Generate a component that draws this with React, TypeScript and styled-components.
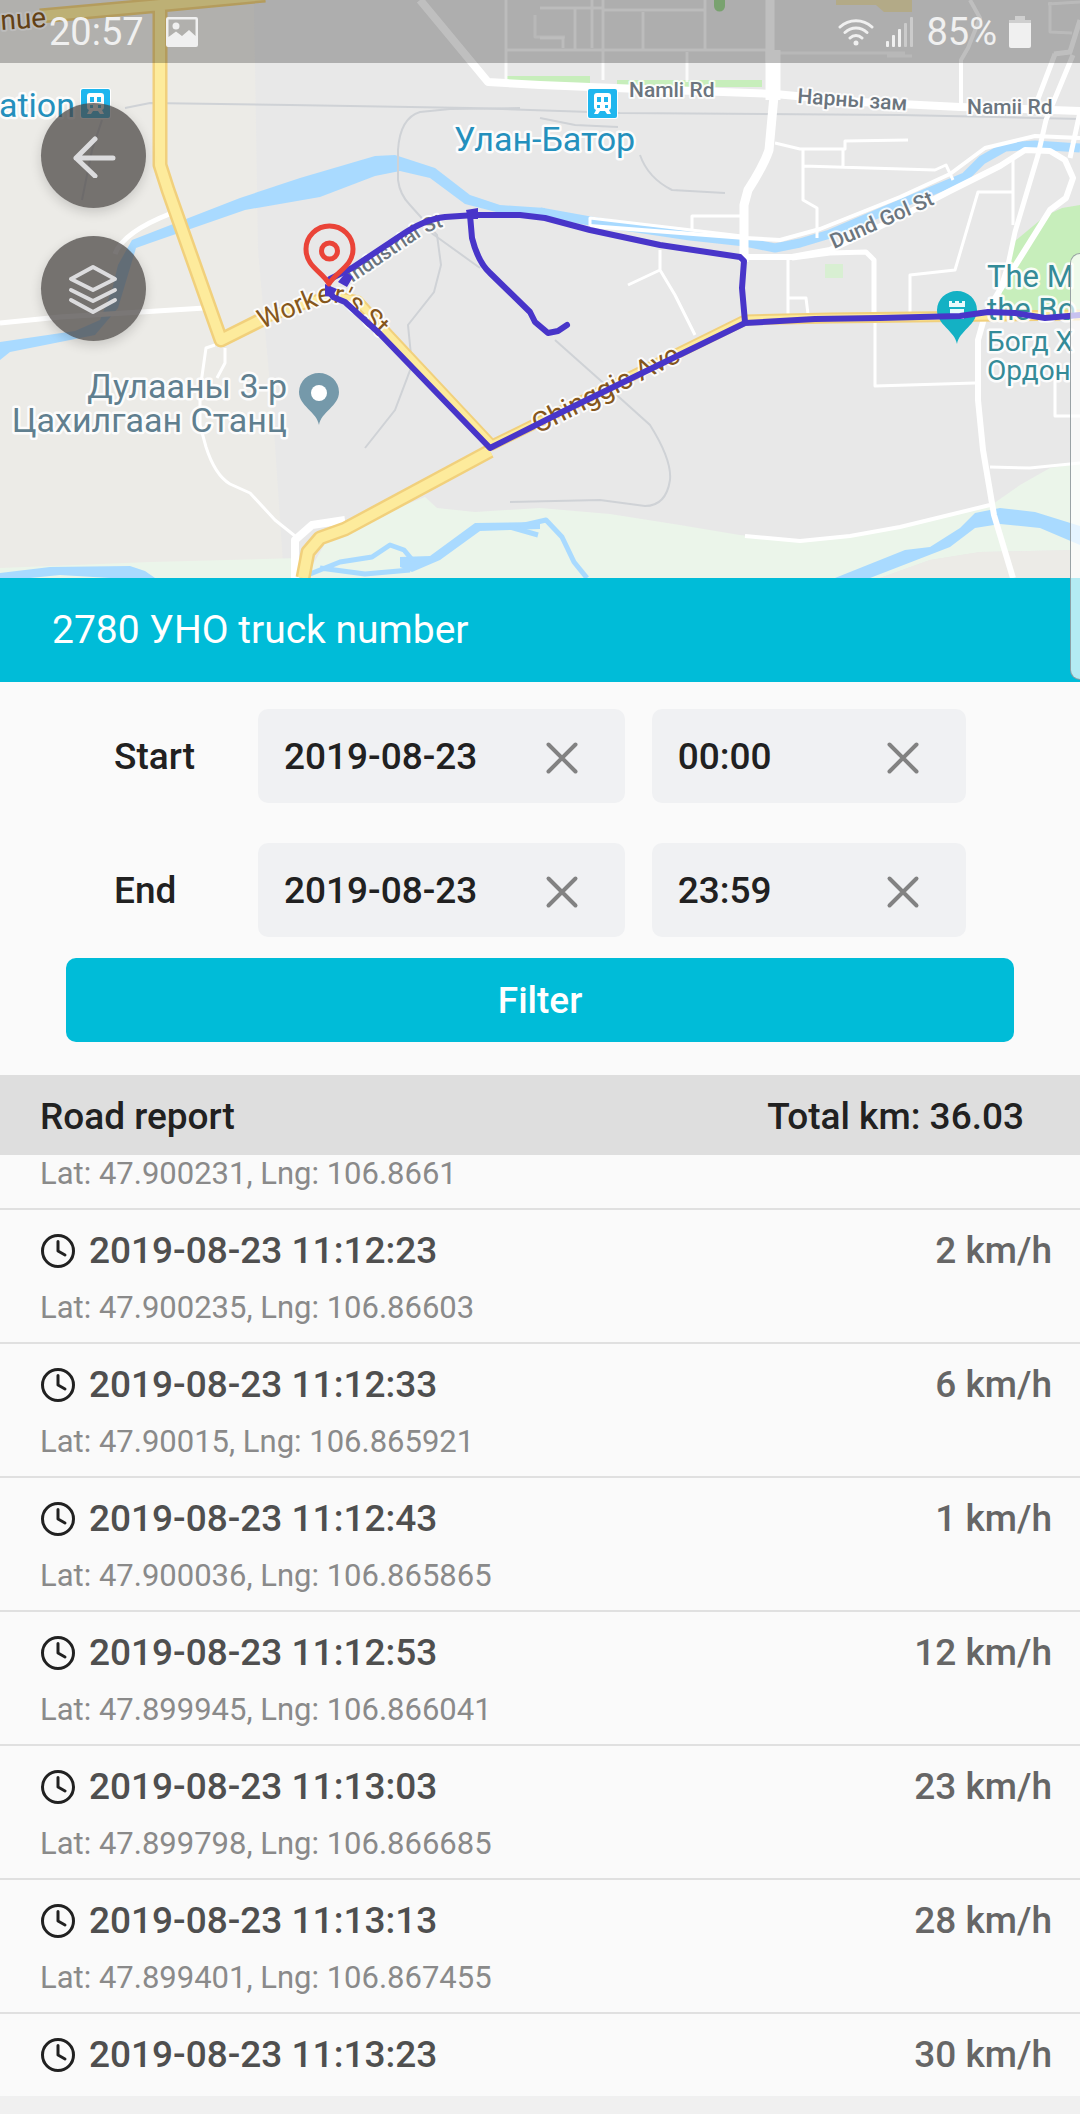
import React from "react";
import styled, { createGlobalStyle } from "styled-components";

const GlobalStyle = createGlobalStyle`
  *, *::before, *::after { box-sizing: border-box; }
  body { margin: 0; background: #f0f0f0; }
  body, button, input { font-family: Roboto, "Noto Sans", sans-serif; }
`;

const cyan = "#00bcd8";

const Screen = styled.div`
  position: relative;
  display: flex;
  flex-direction: column;
  background: #fafafa;
  color: #212121;
`;

/* ---------- status bar ---------- */

const StatusBar = styled.div`
  position: absolute;
  inset: 0 0 auto 0;
  display: flex;
  align-items: center;
  justify-content: space-between;
  height: 63px;
  padding: 0 49px;
  background: rgba(0, 0, 0, 0.25);
  color: #f0f0f0;
  font-size: 38px;
  line-height: 40px;
`;

const StatusGroup = styled.div<{ $gap: number }>`
  display: flex;
  align-items: center;
  gap: ${(p) => p.$gap}px;
`;

/* ---------- map ---------- */

const MapArea = styled.section`
  position: relative;
  display: flex;
`;

const MapCanvas = styled.svg`
  display: block;
  width: 100%;
  aspect-ratio: 1080 / 578;
`;

const MapControls = styled.div`
  position: absolute;
  top: 103px;
  left: 41px;
  display: flex;
  flex-direction: column;
  gap: 28px;
`;

const RoundButton = styled.button`
  display: grid;
  place-items: center;
  width: 105px;
  height: 105px;
  padding: 0;
  border: 0;
  border-radius: 50%;
  background: rgba(70, 67, 65, 0.72);
  box-shadow: 0 4px 12px rgba(0, 0, 0, 0.16);
  color: #dcdcde;
  cursor: pointer;
`;

const EdgeHandle = styled.div`
  position: absolute;
  top: 253px;
  right: 0;
  width: 10px;
  height: 427px;
  border: 1px solid rgba(130, 140, 145, 0.8);
  border-right: 0;
  border-radius: 10px 0 0 10px;
  background: rgba(255, 255, 255, 0.7);
`;

/* ---------- header and filter ---------- */

const TitleBar = styled.header`
  display: flex;
  align-items: center;
  height: 104px;
  padding: 0 52px;
  background: ${cyan};
  color: #fff;
`;

const Title = styled.h1`
  margin: 0;
  font-size: 39px;
  line-height: 48px;
  font-weight: 400;
`;

const FilterForm = styled.form`
  display: flex;
  flex-direction: column;
  padding: 27px 66px 33px;
`;

const FilterRow = styled.div`
  display: grid;
  grid-template-columns: 117px minmax(0, 7fr) minmax(0, 6fr);
  column-gap: 27px;
  align-items: center;
  padding: 0 48px;
  margin-bottom: 40px;

  &:nth-of-type(2) { margin-bottom: 21px; }
`;

const RowLabel = styled.label`
  padding-top: 2px;
  font-size: 37px;
  line-height: 44px;
  font-weight: 500;
`;

const Field = styled.div`
  display: flex;
  align-items: center;
  height: 94px;
  padding: 0 16px 0 26px;
  border-radius: 10px;
  background: #f0f1f3;
`;

const FieldInput = styled.input`
  flex: 1;
  min-width: 0;
  padding: 2px 0 0;
  border: 0;
  outline: 0;
  background: transparent;
  color: #212121;
  font-size: 37px;
  line-height: 44px;
  font-weight: 500;
`;

const ClearButton = styled.button`
  display: grid;
  place-items: center;
  width: 94px;
  height: 94px;
  padding: 4px 0 0;
  border: 0;
  background: transparent;
  color: #828282;
  cursor: pointer;
`;

const SubmitButton = styled.button`
  height: 84px;
  padding: 2px 0 0;
  border: 0;
  border-radius: 10px;
  background: ${cyan};
  color: #fff;
  font-size: 37px;
  line-height: 44px;
  font-weight: 500;
  cursor: pointer;
`;

/* ---------- report ---------- */

const ReportBar = styled.div`
  display: flex;
  align-items: center;
  justify-content: space-between;
  height: 80px;
  padding: 4px 56px 0 40px;
  background: #dedede;
  font-size: 37px;
  line-height: 44px;
  font-weight: 500;
`;

const ReportTitle = styled.h2`
  margin: 0;
  font: inherit;
`;

const ReportList = styled.ul`
  margin: 0;
  padding: 0;
  list-style: none;
`;

const ReportItem = styled.li`
  display: flex;
  flex-direction: column;
  gap: 19px;
  padding: 21px 28px 16px 40px;
  border-bottom: 2px solid #e0e0e0;

  &:first-child { padding-top: 1px; }
  &:last-child { padding-bottom: 21px; border-bottom: 0; }
`;

const ItemHead = styled.div`
  display: flex;
  align-items: center;
  gap: 13px;
  font-size: 37px;
  line-height: 40px;
  font-weight: 500;
`;

const Stamp = styled.time`
  flex: 1;
  color: #4f4f4f;
`;

const Speed = styled.span`
  color: #666;
`;

const Coords = styled.div`
  color: #8a8a8a;
  font-size: 31px;
  line-height: 36px;
`;

const BottomStrip = styled.div`
  height: 20px;
  background: #f0f0f0;
`;

/* ---------- icons ---------- */

const ClockIcon = () => (
  <svg width="36" height="36" viewBox="0 0 36 36" fill="none" stroke="#212121" strokeWidth="3" strokeLinecap="round" strokeLinejoin="round" aria-hidden="true">
    <circle cx="18" cy="18" r="15.500" />
    <path d="M18 8.500v9.500l7 4" />
  </svg>
);

const CrossIcon = () => (
  <svg width="34" height="34" viewBox="0 0 34 34" fill="none" stroke="currentColor" strokeWidth="4" strokeLinecap="round" aria-hidden="true">
    <path d="M3.500 3.500L30.500 30.500M30.500 3.500L3.500 30.500" />
  </svg>
);

const ArrowIcon = () => (
  <svg width="44" height="44" viewBox="0 0 44 44" fill="none" stroke="currentColor" strokeWidth="5" strokeLinecap="round" strokeLinejoin="round" aria-hidden="true">
    <path d="M23 5L4 24L23 42M4 24H41" />
  </svg>
);

const LayersIcon = () => (
  <svg width="52" height="52" viewBox="0 0 52 52" fill="none" stroke="currentColor" strokeWidth="4" strokeLinecap="round" strokeLinejoin="round" aria-hidden="true">
    <path d="M25 4L47 16L25 27L3 16ZM3 27L25 38L47 27M3 37L25 49L47 37" />
  </svg>
);

const PictureIcon = () => (
  <svg width="32" height="30" viewBox="0 0 32 30" aria-hidden="true">
    <path fillRule="evenodd" fill="currentColor" d="M2 0H30a2 2 0 0 1 2 2V28a2 2 0 0 1-2 2H2a2 2 0 0 1-2-2V2a2 2 0 0 1 2-2ZM2.500 2.500V20L10 14.500L16 19L23 13L29.500 19V2.500Z" />
    <circle cx="10" cy="9" r="3.500" fill="currentColor" />
  </svg>
);

const WifiIcon = () => (
  <svg width="36" height="28" viewBox="0 0 36 28" fill="none" stroke="currentColor" strokeWidth="3" strokeLinecap="round" aria-hidden="true">
    <path d="M2 9C11 .5 25 .5 34 9M7 14.500C13.500 8.500 22.500 8.500 29 14.500M12 20C15.500 16.500 20.500 16.500 24 20" />
    <circle cx="18" cy="25" r="2.500" fill="currentColor" stroke="none" />
  </svg>
);

const SignalIcon = () => (
  <svg width="28" height="30" viewBox="0 0 28 30" fill="currentColor" aria-hidden="true">
    <rect x="0" y="24" width="3" height="6" rx="1" />
    <rect x="6" y="18" width="3" height="12" rx="1" />
    <rect x="12" y="12" width="3" height="18" rx="1" />
    <rect x="18" y="6" width="3" height="24" rx="1" opacity=".45" />
    <rect x="24" y="0" width="3" height="30" rx="1" opacity=".45" />
  </svg>
);

const BatteryIcon = () => (
  <svg width="22" height="32" viewBox="0 0 22 32" fill="currentColor" aria-hidden="true">
    <path d="M6 0h10v4H6Z" opacity=".5" />
    <path d="M0 7V4h22v3Z" opacity=".5" />
    <path d="M0 7h22v23a2 2 0 0 1-2 2H2a2 2 0 0 1-2-2Z" />
  </svg>
);

const StationBadge = ({ x, y }: { x: number; y: number }) => (
  <g transform={`translate(${x} ${y})`}>
    <rect x="-1" y="-1" width="31" height="31" rx="3" fill="#fff" />
    <rect width="29" height="29" rx="2" fill="#1fb6ee" />
    <path fill="#fff" d="M9 4H20a3 3 0 0 1 3 3V18a3 3 0 0 1-2 3l2 4H19l-2-3H12l-2 3H6l2-4a3 3 0 0 1-2-3V7a3 3 0 0 1 3-3Z" />
    <path fill="#1fb6ee" d="M9 8h4v5H9ZM16 8h4v5H16ZM9 16h3v3H9ZM17 16h3v3H17Z" />
  </g>
);

/* ---------- map drawing ---------- */

const CityMap = () => (
  <MapCanvas viewBox="0 0 1080 578" preserveAspectRatio="xMidYMid slice" role="img" aria-label="Truck route">
    <rect width="1080" height="578" fill="#e8e8e8" />
    <path d="M0 0H254L258 250L274 430L284 578H0Z" fill="#ecebe7" />

    {/* parks and flood plain */}
    <path d="M1080 205L1062 208L1045 216L1015 241L1008 262L1000 300V312H1080Z" fill="#c7eebb" />
    <path d="M0 568L150 562L300 558V578H0Z" fill="#ebf5ea" />
    <path d="M305 578L330 535L425 497L437 508L475 512L540 508L610 514L680 525L740 535L800 542L850 537L990 506L1020 485L1050 468L1080 463V550L980 552L930 560L880 578Z" fill="#ebf5ea" />
    <path d="M880 578L930 560L980 552L1080 550V578Z" fill="#ecebe7" />
    <path d="M507 76H590V83H507ZM617 80H762V87H617Z" fill="#c7eebb" />
    <path d="M825 264h18v14h-18Z" fill="#d8efd2" />
    <path d="M714 0h11v6a5 5 0 0 1-11 0Z" fill="#a2d895" />
    <path d="M836 0h76v12h-28l-8-7h-40Z" fill="#efe3b5" />

    {/* rivers */}
    <g fill="#a9daff">
      <path d="M132 240L240 198L300 178L375 156L395 155L435 168L470 195L500 205L545 208V216L500 213L465 204L430 178L400 171L375 176L320 197L245 210L150 243L136 248L130 268L118 308L95 335L10 352L0 360V342L75 331L100 320L112 290L118 265Z" />
      <path d="M835 578L905 550L930 547L960 528L975 513L1000 508L1035 512L1080 526V545L1040 528L1000 524L975 528L950 547L870 578Z" />
      <path d="M0 573L50 567L130 566L145 571L155 578H110L60 575L30 578H0Z" />
      <path d="M400 557L430 556L475 523L540 522V529L480 531L440 560L412 572L400 567Z" />
    </g>
    <g fill="none" stroke="#a9daff" strokeLinejoin="round">
      <path d="M540 212L590 221L690 236L745 242L775 248L800 243L830 234L910 200L965 177L982 160L1005 147L1035 145L1080 148" strokeWidth="9" />
      <path d="M310 574L340 562L372 557L390 545L404 550L414 562M520 526L546 520L562 537L574 562L587 578M320 568L365 574L410 570M510 527L538 535" strokeWidth="5" />
    </g>

    {/* railways */}
    <g fill="none" stroke="#cfd2d6" strokeWidth="2">
      <path d="M125 108L150 103L290 105L470 108L620 113L900 115L1080 119" />
      <path d="M520 108L450 109L420 112Q400 118 398 150V180Q400 195 410 205L437 235L441 265L434 292L408 325L412 365L395 410L365 448" />
      <path d="M430 232L480 268M640 155Q648 178 672 190L725 193M555 340L600 380L650 425Q672 460 670 480Q666 506 645 506L600 500L510 502M540 118L575 125L618 127" />
      <path d="M102 120L92 150L82 200" />
    </g>

    {/* local streets */}
    <g fill="none" stroke="#fff" strokeWidth="3" strokeLinejoin="round">
      <path d="M506 0V85M540 38H563V48M506 50H770M603 0V80M687 52V82M705 0V50M603 10H705M643 12V50M575 8V50M592 0V48M540 8H603" opacity=".8" />
      <path d="M535 15v22h30" opacity=".6" />
      <path d="M775 143L800 149L845 149V141L908 140M803 148V200L817 208V238M803 166L935 170L946 165L953 180M843 149V166" />
      <path d="M742 216H692V230M590 226V218L742 236M788 258V314M788 298H806L808 314M660 250V270L628 285M660 270L675 295L695 335" />
      <path d="M1013 160V225M1013 192H978L955 270L910 275V312M875 320V386L975 383M1055 370V416H1080M990 467L1030 468L1080 463" />
      <path d="M1050 2V32L1072 33M1048 4L1080 2" opacity=".7" />
      <path d="M215 345L206 348L200 390V425L206 447Q215 475 230 484L250 493L275 520L295 536M225 348V363L217 378" />
      <path d="M770 53H905M887 56H912" opacity=".6" />
    </g>
    <g fill="none" stroke="#fff" strokeWidth="5" strokeLinejoin="round">
      <path d="M0 323L60 317L205 308M115 254Q123 232 172 213" />
      <path d="M590 226L745 238L780 240L820 229L900 197L950 174L985 148L1035 136L1080 138" strokeWidth="4" />
      <path d="M745 257L792 257L830 250L900 217L950 191L1000 166L1025 150L1050 151L1065 160L1073 178L1066 198L1050 210L1000 290" strokeWidth="6" />
      <path d="M792 258L830 253L866 252L874 260V314" />
      <path d="M1055 54L1036 104M1073 55L1046 120L1038 155L1015 232L1008 265L1000 290M1080 112L1070 158M1080 20L1070 52L1054 54" />
      <path d="M970 0L980 18L968 48L961 60V105" strokeWidth="4" />
      <path d="M745 536L800 541L850 536L900 527L990 505" strokeWidth="4" />
      <path d="M1000 290L985 315L978 340V400L983 450L994 515L1013 578" strokeWidth="6" />
      <path d="M295 578V540L312 525L345 520" strokeWidth="8" />
    </g>
    <g fill="none" stroke="#fff" strokeLinejoin="round">
      <path d="M420 0L488 82L540 85L640 89L775 94L860 102L960 107L1080 111" strokeWidth="8" />
      <path d="M770 0V60L774 96L769 150Q764 165 748 190L744 205V262" strokeWidth="9" />
      <path d="M773 50V100" strokeWidth="15" />
    </g>

    {/* avenues */}
    <g fill="none" strokeLinejoin="round">
      <g stroke="#f1d07c">
        <path d="M40 16L150 6L265 -5M160 6V165L168 190L221 340L265 318" strokeWidth="15" />
        <path d="M265 318L330 295L358 301L388 334L492 445L745 320L830 318L1080 315" strokeWidth="11" />
        <path d="M490 451L345 529L320 538L308 552L303 578" strokeWidth="15" />
      </g>
      <g stroke="#fdeb9c">
        <path d="M40 16L150 6L265 -5M160 6V165L168 190L221 340L265 318" strokeWidth="10" />
        <path d="M265 318L330 295L358 301L388 334L492 445L745 320L830 318L1080 315" strokeWidth="7" />
        <path d="M490 451L345 529L320 538L308 552L303 578" strokeWidth="10" />
      </g>
    </g>

    {/* street names */}
    <defs>
      <path id="workers" d="M262 329L325 303Q343 300 355 314L410 367" />
      <path id="industrial" d="M352 283L420 237Q440 224 475 221" />
    </defs>
    <g paintOrder="stroke" stroke="#fff" strokeOpacity=".85" strokeWidth="4" strokeLinejoin="round" fontSize="21">
      <g fill="#6b757e" fontWeight="500">
        <text x="629" y="97">Namli Rd</text>
        <text transform="translate(797 103) rotate(4)">Нарны зам</text>
        <text x="967" y="114">Namii Rd</text>
        <text transform="translate(834 249) rotate(-24)">Dund Gol St</text>
        <text fontSize="20"><textPath href="#industrial">Industrial St</textPath></text>
      </g>
      <g fill="#85571c" fontSize="27">
        <text><textPath href="#workers">Worker's St</textPath></text>
        <text transform="translate(538 434) rotate(-27)" fontSize="28">Chinggis Ave</text>
        <text transform="translate(1 30) rotate(-4)" fontSize="28">nue</text>
      </g>
    </g>

    {/* places */}
    <g paintOrder="stroke" stroke="#fff" strokeOpacity=".9" strokeWidth="5" strokeLinejoin="round">
      <g fill="#2490bd">
        <text x="75" y="117" fontSize="34" textAnchor="end">ation</text>
        <text x="454" y="151" fontSize="34">Улан-Батор</text>
      </g>
      <g fill="#607f8f" fontSize="34" textAnchor="end">
        <text x="287" y="398">Дулааны 3-р</text>
        <text x="287" y="432">Цахилгаан Станц</text>
      </g>
      <g fill="#348b98" fontSize="31">
        <text x="987" y="287">The M</text>
        <text x="987" y="320">the Bo</text>
        <text x="987" y="351" fontSize="28">Богд Х</text>
        <text x="987" y="380" fontSize="28">Ордон</text>
      </g>
    </g>
    <StationBadge x={81} y={89} />
    <StationBadge x={588} y={89} />
    <path d="M319 425C317 412 299 406 299 392a20 19 0 0 1 40 0C339 406 321 412 319 425Z" fill="#7599aa" />
    <circle cx="319" cy="393" r="8" fill="#fff" />
    <path d="M957 344C955 331 937 325 937 310a20 19 0 0 1 40 0C977 325 959 331 957 344Z" fill="#14b1c4" />
    <path d="M949 301h3v2h3v-2h4v2h3v-2h3v6h-16ZM950 309h14v10h-14Z" fill="#e8fafc" />

    {/* recorded track */}
    <g fill="none" stroke="#4835c9" strokeLinejoin="round" strokeLinecap="round">
      <path d="M330 279L352 268L400 236Q425 219 445 217L475 215L520 215L545 218L590 230L660 245L720 254L740 257L744 261L742 288L745 322" strokeWidth="6" />
      <path d="M470 215L472 238Q478 262 490 273L530 312L535 322L548 333L558 331L567 325" strokeWidth="6" />
      <path d="M328 288L333 297L345 302L380 334L490 448L560 413L745 323L815 319L880 318L960 316L988 312L1015 313L1045 318L1080 315" strokeWidth="6" />
    </g>
    <path d="M466 210l12-2v11h-10ZM346 272l7 5l-6 10l-9-5ZM325 284l12 5l-5 8l-7-1Z" fill="#4835c9" />
    <path d="M329 284C323 272 306 267 306 249a23.500 23 0 0 1 47 0C353 267 335 272 329 284Z" fill="none" stroke="#ea4438" strokeWidth="5" strokeLinejoin="round" />
    <circle cx="329.500" cy="251" r="8" fill="none" stroke="#ea4438" strokeWidth="5" />
  </MapCanvas>
);

/* ---------- data ---------- */

type Entry = { stamp?: string; speed?: number; coords?: string };

const entries: Entry[] = [
  { coords: "Lat: 47.900231, Lng: 106.8661" },
  { stamp: "2019-08-23 11:12:23", speed: 2, coords: "Lat: 47.900235, Lng: 106.86603" },
  { stamp: "2019-08-23 11:12:33", speed: 6, coords: "Lat: 47.90015, Lng: 106.865921" },
  { stamp: "2019-08-23 11:12:43", speed: 1, coords: "Lat: 47.900036, Lng: 106.865865" },
  { stamp: "2019-08-23 11:12:53", speed: 12, coords: "Lat: 47.899945, Lng: 106.866041" },
  { stamp: "2019-08-23 11:13:03", speed: 23, coords: "Lat: 47.899798, Lng: 106.866685" },
  { stamp: "2019-08-23 11:13:13", speed: 28, coords: "Lat: 47.899401, Lng: 106.867455" },
  { stamp: "2019-08-23 11:13:23", speed: 30 },
];

const ClearableField = ({ id, name, initial }: { id: string; name: string; initial: string }) => {
  const [value, setValue] = React.useState(initial);
  return (
    <Field>
      <FieldInput id={id} aria-label={name} value={value} onChange={(e) => setValue(e.target.value)} />
      <ClearButton type="button" aria-label={`Clear ${name}`} onClick={() => setValue("")}>
        <CrossIcon />
      </ClearButton>
    </Field>
  );
};

const PeriodRow = ({ label, date, time }: { label: string; date: string; time: string }) => {
  const id = label.toLowerCase();
  return (
    <FilterRow>
      <RowLabel htmlFor={id}>{label}</RowLabel>
      <ClearableField id={id} name={`${label} date`} initial={date} />
      <ClearableField id={`${id}-time`} name={`${label} time`} initial={time} />
    </FilterRow>
  );
};

export default function App() {
  return (
    <>
      <GlobalStyle />
      <Screen>
        <MapArea>
          <CityMap />
          <MapControls>
            <RoundButton type="button" aria-label="Back"><ArrowIcon /></RoundButton>
            <RoundButton type="button" aria-label="Map layers"><LayersIcon /></RoundButton>
          </MapControls>
          <StatusBar>
            <StatusGroup $gap={22}>
              <span>20:57</span>
              <PictureIcon />
            </StatusGroup>
            <StatusGroup $gap={12}>
              <WifiIcon />
              <SignalIcon />
              <span>85%</span>
              <BatteryIcon />
            </StatusGroup>
          </StatusBar>
        </MapArea>

        <TitleBar>
          <Title>2780 УНО truck number</Title>
        </TitleBar>

        <FilterForm onSubmit={(e) => e.preventDefault()}>
          <PeriodRow label="Start" date="2019-08-23" time="00:00" />
          <PeriodRow label="End" date="2019-08-23" time="23:59" />
          <SubmitButton type="submit">Filter</SubmitButton>
        </FilterForm>

        <ReportBar>
          <ReportTitle>Road report</ReportTitle>
          <span>Total km: 36.03</span>
        </ReportBar>
        <ReportList>
          {entries.map((entry) => (
            <ReportItem key={entry.stamp ?? entry.coords}>
              {entry.stamp && (
                <ItemHead>
                  <ClockIcon />
                  <Stamp>{entry.stamp}</Stamp>
                  <Speed>{entry.speed} km/h</Speed>
                </ItemHead>
              )}
              {entry.coords && <Coords>{entry.coords}</Coords>}
            </ReportItem>
          ))}
        </ReportList>
        <BottomStrip />
        <EdgeHandle />
      </Screen>
    </>
  );
}
